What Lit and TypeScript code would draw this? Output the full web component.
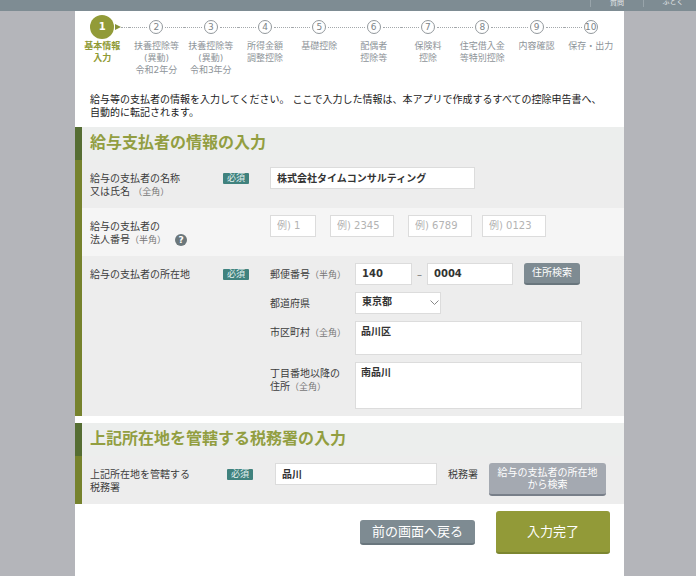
import { LitElement, html, css } from "lit";
import { customElement } from "lit/decorators.js";

interface Step {
  n: number;
  lines: string[];
}

const STEPS: Step[] = [
  { n: 1, lines: ["基本情報", "入力"] },
  { n: 2, lines: ["扶養控除等", "(異動)", "令和2年分"] },
  { n: 3, lines: ["扶養控除等", "(異動)", "令和3年分"] },
  { n: 4, lines: ["所得金額", "調整控除"] },
  { n: 5, lines: ["基礎控除"] },
  { n: 6, lines: ["配偶者", "控除等"] },
  { n: 7, lines: ["保険料", "控除"] },
  { n: 8, lines: ["住宅借入金", "等特別控除"] },
  { n: 9, lines: ["内容確認"] },
  { n: 10, lines: ["保存・出力"] },
];

@customElement("step-bar")
export class StepBar extends LitElement {
  static styles = css`
    :host {
      display: block;
    }
    .steps {
      display: grid;
      grid-template-columns: repeat(10, 1fr);
      margin: 0;
      padding: 4px 6px 0 0;
      list-style: none;
    }
    .step {
      min-width: 0;
      text-align: center;
      color: #8e9499;
      font-size: 9px;
      line-height: 12px;
      white-space: nowrap;
    }
    .track {
      display: flex;
      align-items: center;
      gap: 2px;
      height: 24px;
      margin-bottom: 1px;
    }
    .line {
      flex: 1;
      border-top: 1px dotted #a4a8ab;
    }
    .line.hidden {
      visibility: hidden;
    }
    .dot {
      display: flex;
      align-items: center;
      justify-content: center;
      box-sizing: border-box;
      width: 14px;
      height: 14px;
      border: 1px solid #92989c;
      border-radius: 50%;
      font-size: 9px;
      color: #7d8488;
    }
    .label {
      display: block;
    }
    .current {
      color: #8f9a35;
      font-weight: bold;
    }
    .current .track {
      gap: 1px;
    }
    .current .dot {
      width: 24px;
      height: 24px;
      border: 0;
      background: #929b38;
      color: #fff;
      font-size: 10px;
    }
    .next {
      flex: 1;
      display: flex;
      align-items: center;
    }
    .arrow {
      border: 3px solid transparent;
      border-left: 6px solid #859239;
      border-right: 0;
    }
  `;

  render() {
    const last = STEPS.length - 1;
    return html`
      <ol class="steps">
        ${STEPS.map(
          (s, i) => html`
            <li class="step ${i === 0 ? "current" : ""}">
              <div class="track">
                <span class="line ${i === 0 ? "hidden" : ""}"></span>
                <span class="dot">${s.n}</span>
                ${i === 0
                  ? html`<span class="next"><span class="arrow"></span><span class="line"></span></span>`
                  : html`<span class="line ${i === last ? "hidden" : ""}"></span>`}
              </div>
              ${s.lines.map((l) => html`<span class="label">${l}</span>`)}
            </li>
          `
        )}
      </ol>
    `;
  }
}

@customElement("app-root")
export class AppRoot extends LitElement {
  static styles = css`
    :host {
      display: block;
      min-height: 100vh;
      background: #b4b5ba;
      font-family: "DejaVu Sans", "Noto Sans CJK JP", sans-serif;
      font-size: 10px;
      line-height: 13px;
      color: #3c3c3c;
    }
    .topbar {
      display: flex;
      justify-content: flex-end;
      align-items: flex-end;
      height: 11px;
      overflow: hidden;
      background: #7e8c93;
      color: #e6eaec;
      font-size: 7px;
      line-height: 8px;
    }
    .toplink {
      box-sizing: border-box;
      width: 53px;
      height: 15px;
      margin-bottom: 4px;
      padding-top: 7px;
      border-left: 1px solid #98a4aa;
      color: inherit;
      text-align: center;
      text-decoration: none;
    }
    .toplink + .toplink {
      padding: 6px 0 0 6px;
    }
    .page {
      box-sizing: border-box;
      min-height: calc(100vh - 11px);
      margin: 0 72px 0 75px;
      background: #fff;
    }
    .intro {
      margin: 0;
      padding: 17px 15px 8px;
      color: #222;
    }
    .section {
      margin-bottom: 7px;
      background: #ededed;
      border-left: 7px solid #76822d;
    }
    .title {
      margin: 0 0 0 -7px;
      padding: 0 0 1px 8px;
      border-left: 7px solid #556d33;
      background: #eceeed;
      color: #929e41;
      font-size: 16px;
      line-height: 32px;
    }
    .row {
      display: grid;
      grid-template-columns: 133px 47px 1fr;
      padding: 7px 12px 0 8px;
    }
    .name,
    .corp {
      min-height: 48px;
      box-sizing: border-box;
    }
    .corp {
      background: #f5f5f5;
    }
    .address {
      padding-bottom: 7px;
    }
    .office {
      grid-template-columns: 137px 48px 1fr;
      padding-bottom: 8px;
    }
    .head {
      padding-top: 5px;
    }
    .hint {
      color: #777;
      font-size: 9px;
    }
    .badge {
      justify-self: start;
      align-self: start;
      margin-top: 6px;
      width: 26px;
      border-radius: 1px;
      background: #40827e;
      color: #e3f1ef;
      font-size: 9px;
      line-height: 11px;
      text-align: center;
    }
    .help {
      width: 12px;
      height: 12px;
      margin-left: 6px;
      padding: 0;
      border: 0;
      border-radius: 50%;
      background: #6b777b;
      color: #fff;
      font: bold 9px/12px "DejaVu Sans", sans-serif;
      vertical-align: 0;
    }
    .input {
      box-sizing: border-box;
      display: block;
      min-width: 0;
      height: 22px;
      margin: 0;
      padding: 0 6px 2px;
      border: 1px solid #dcdcdc;
      border-radius: 0;
      background: #fff;
      color: #333;
      font: bold 10px/14px "DejaVu Sans", "Noto Sans CJK JP", sans-serif;
      resize: none;
      outline: none;
    }
    .input::placeholder {
      color: #b3b3b3;
      font-weight: normal;
      opacity: 1;
    }
    textarea.input {
      width: 227px;
      padding: 3px 5px;
    }
    .city {
      height: 34px;
    }
    .street {
      height: 47px;
    }
    .company {
      width: 205px;
    }
    .parts {
      display: flex;
      align-items: flex-start;
    }
    .w45 {
      width: 46px;
      margin-right: 14px;
    }
    .w64 {
      width: 64px;
      margin-right: 14px;
    }
    .w64 + .w64 {
      margin-right: 10px;
    }
    .w57 {
      width: 57px;
    }
    .w86 {
      width: 86px;
    }
    .dash {
      width: 15px;
      padding-top: 5px;
      text-align: center;
      color: #777;
    }
    .fields {
      display: grid;
      grid-template-columns: 85px 1fr;
      row-gap: 7px;
    }
    .selectbox {
      position: relative;
      width: 86px;
    }
    .selectbox .input {
      width: 86px;
      appearance: none;
    }
    .chevron {
      position: absolute;
      right: 2px;
      top: 7px;
      width: 9px;
      height: 7px;
      pointer-events: none;
    }
    .btn {
      margin: 0;
      padding: 0;
      border: 0;
      border-bottom: 2px solid #69767d;
      border-radius: 3px;
      background: #7e8b92;
      color: #fff;
      font-family: inherit;
      font-size: 10px;
      line-height: 20px;
    }
    .find {
      width: 56px;
      margin-left: 11px;
    }
    .lookup {
      width: 117px;
      padding: 4px 0 3px;
      border-bottom-color: #787f89;
      background: #a4a9b1;
      line-height: 12px;
    }
    .officename {
      width: 162px;
    }
    .unit {
      padding: 5px 11px 0;
    }
    .actions {
      display: flex;
      justify-content: flex-end;
      align-items: center;
      gap: 21px;
      padding: 0 14px 22px 0;
    }
    .back {
      width: 115px;
      font-size: 13px;
      line-height: 23px;
    }
    .done {
      width: 114px;
      border-bottom-color: #7c8630;
      background: #929a38;
      font-size: 13px;
      line-height: 41px;
    }
  `;

  render() {
    return html`
      <nav class="topbar">
        <a class="toplink" href="#">質問</a>
        <a class="toplink" href="#">ふとく</a>
      </nav>
      <main class="page">
        <step-bar></step-bar>
        <p class="intro">
          給与等の支払者の情報を入力してください。 ここで入力した情報は、本アプリで作成するすべての控除申告書へ、<br />自動的に転記されます。
        </p>

        <section class="section">
          <h2 class="title">給与支払者の情報の入力</h2>
          <div class="row name">
            <label class="head" for="company">給与の支払者の名称<br />又は氏名 <span class="hint">（全角）</span></label>
            <span class="badge">必須</span>
            <input id="company" class="input company" value="株式会社タイムコンサルティング" />
          </div>
          <div class="row corp">
            <div class="head">
              <label for="corp1">給与の支払者の<br />法人番号<span class="hint">（半角）</span></label>
              <button class="help" aria-label="ヘルプ">?</button>
            </div>
            <span></span>
            <div class="parts">
              <input id="corp1" class="input w45" placeholder="例) 1" />
              <input class="input w64" aria-label="法人番号 2" placeholder="例) 2345" />
              <input class="input w64" aria-label="法人番号 3" placeholder="例) 6789" />
              <input class="input w64" aria-label="法人番号 4" placeholder="例) 0123" />
            </div>
          </div>
          <div class="row address">
            <div class="head">給与の支払者の所在地</div>
            <span class="badge">必須</span>
            <div class="fields">
              <label class="head" for="zip1">郵便番号<span class="hint">（半角）</span></label>
              <div class="parts">
                <input id="zip1" class="input w57" value="140" />
                <span class="dash">–</span>
                <input class="input w86" aria-label="郵便番号 下4桁" value="0004" />
                <button class="btn find">住所検索</button>
              </div>
              <label class="head" for="pref">都道府県</label>
              <div class="selectbox">
                <select id="pref" class="input">
                  <option>東京都</option>
                </select>
                <svg class="chevron" viewBox="0 0 9 7" fill="none" stroke="#888" aria-hidden="true">
                  <path d="M0.5 1.5 L4.5 5.5 L8.5 1.5" />
                </svg>
              </div>
              <label class="head" for="city">市区町村<span class="hint">（全角）</span></label>
              <textarea id="city" class="input city" .value=${"品川区"}></textarea>
              <label class="head" for="street">丁目番地以降の<br />住所<span class="hint">（全角）</span></label>
              <textarea id="street" class="input street" .value=${"南品川"}></textarea>
            </div>
          </div>
        </section>

        <section class="section">
          <h2 class="title">上記所在地を管轄する税務署の入力</h2>
          <div class="row office">
            <label class="head" for="office">上記所在地を管轄する<br />税務署</label>
            <span class="badge">必須</span>
            <div class="parts">
              <input id="office" class="input officename" value="品川" />
              <span class="unit">税務署</span>
              <button class="btn lookup">給与の支払者の所在地<br />から検索</button>
            </div>
          </div>
        </section>

        <div class="actions">
          <button class="btn back">前の画面へ戻る</button>
          <button class="btn done">入力完了</button>
        </div>
      </main>
    `;
  }
}
